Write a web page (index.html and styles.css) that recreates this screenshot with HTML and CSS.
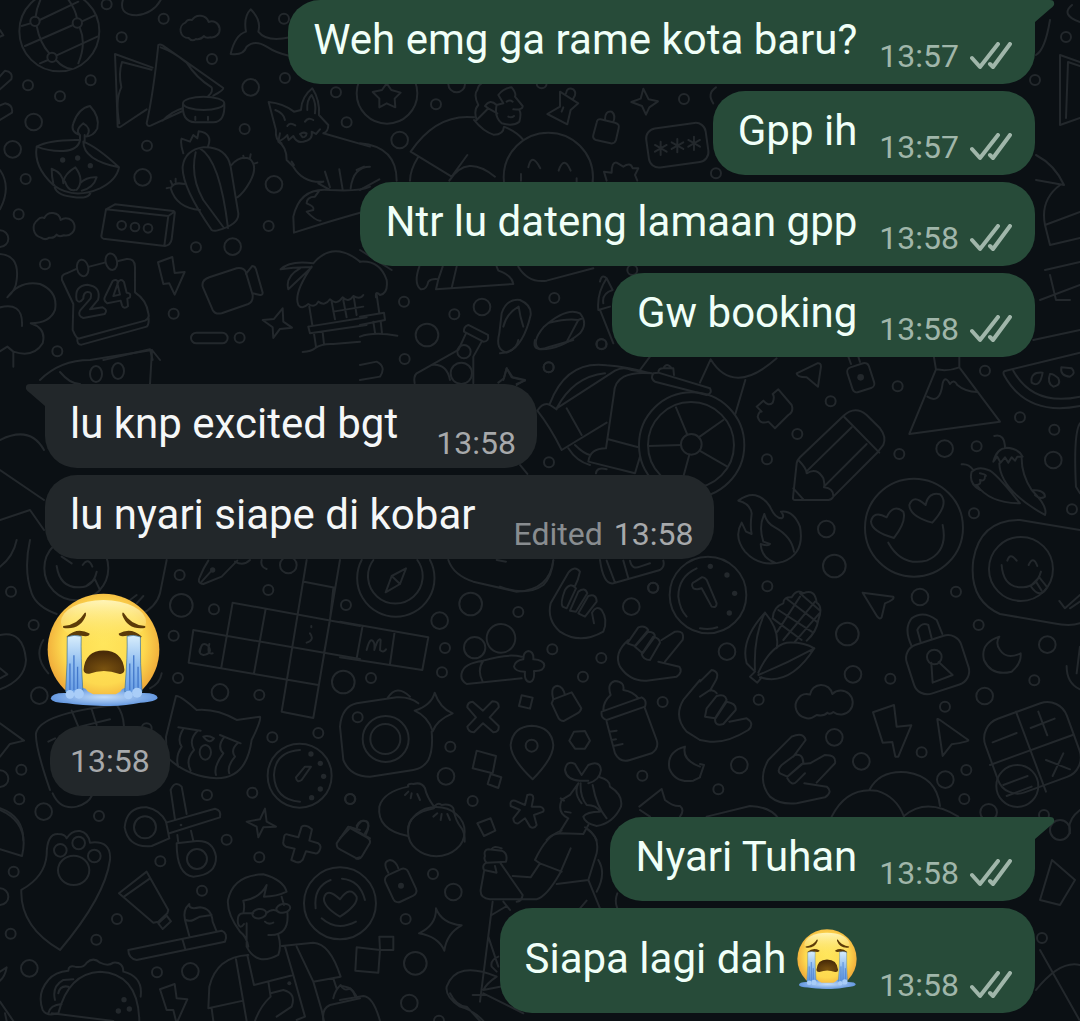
FILE: index.html
```html
<!DOCTYPE html>
<html lang="id">
  <head>
    <meta charset="UTF-8" />
    <meta name="viewport" content="width=device-width, initial-scale=1" />
    <title>Chat</title>
    <link rel="stylesheet" href="styles.css">
  </head>
  <body>
    <!-- WALLPAPER -->
    <svg class="wallpaper" viewBox="0 0 1080 1021" preserveAspectRatio="xMinYMin slice" aria-hidden="true">
      <defs>
        <marker id="dot-small" markerUnits="userSpaceOnUse" overflow="visible"><circle class="ring" r="15" /></marker>
        <marker id="dot-medium" markerUnits="userSpaceOnUse" overflow="visible"><circle class="ring" r="25" /></marker>
        <marker id="dot-large" markerUnits="userSpaceOnUse" overflow="visible"><circle class="ring" r="34" /></marker>
      </defs>

      <!-- top left: globe, samosa, diya, cactus, fox, calendar -->
      <g transform="scale(.3333)">
        <polyline class="dots-small" points="320,13 365,112 491,56 852,56 636,177 272,241 84,256 180,289 855,234 734,387 441,437 77,537 56,643 806,678 588,742 135,793 521,941 719,1013 172,1054 1008,277 1040,367" />
        <polyline class="dots-medium" points="101,366 38,448 428,532 698,740 752,262 822,553 0,716" />
        <circle cx="178" cy="94" r="120" />
        <circle cx="105" cy="64" r="14" /><circle cx="232" cy="69" r="14" /><circle cx="156" cy="172" r="14" />
        <path d="M107 50Q110 20 128-15M119 60L235 5M65 78L91 70M110 78Q120 130 148 160M75 138L219 75M246 64L285 46M190-20Q225 20 231 55M239 82Q260 130 235 190M120 190L144 180M170 166L292 110M168 180Q190 205 215 207" />
        <path d="M372-10Q350 45 410 46Q460 40 482 0M0 90L10 106L-5 112" />
        <path d="M566 114A24 24 0 0 1 556 68A18 18 0 0 1 576 60A28 28 0 0 1 626 66A24 24 0 1 1 632 112Q618 116 612 108Q602 120 588 117Q576 126 566 114Z" />
        <path d="M692 162Q705 105 738 95Q730 50 752 28Q785 60 775 95Q800 128 870 112M692 162Q730 168 740 140Q765 118 800 140Q830 160 870 168" />
        <path d="M458 203L345 162Q350 280 353 380Q358 384 365 378L440 328M455 209L366 186Q355 220 364 262Q345 300 358 370M475 135Q460 280 440 370Q442 380 452 377L548 333M475 135Q480 132 488 136L565 190L670 264Q672 270 640 287M482 142Q520 155 560 188Q590 235 635 262Q640 275 625 288M488 362Q515 335 548 325" />
        <ellipse cx="611" cy="310" rx="62" ry="20" /><path d="M549 312Q545 365 585 367H640Q676 365 673 312M586 350V360M624 350V360" />
        <path d="M110 440Q150 418 240 420Q235 450 190 453Q150 455 110 440Q100 500 160 555Q220 600 300 565Q350 540 357 502Q290 440 250 425Q250 480 357 502M240 420V405M254 425V405M240 405Q210 395 220 370Q235 325 270 318Q300 350 292 385Q280 410 254 410M238 403Q225 390 250 370Q275 385 262 405M163 555Q165 585 215 590Q270 600 272 575M160 550Q155 530 155 506Q190 520 190 550M190 545Q195 520 226 502Q255 540 230 570M240 550Q260 530 290 532Q280 565 245 572M195 545Q205 575 225 570" />
        <circle class="spot" cx="188" cy="480" r="8" /><circle class="spot" cx="233" cy="474" r="8" /><circle class="spot" cx="271" cy="497" r="8" />
        <path d="M550 460Q540 430 545 416L570 425L580 405L592 415L596 394Q640 400 624 440M635 690Q545 560 548 500Q555 450 610 442Q680 440 692 500L715 640Q718 675 650 692Q640 694 635 690M587 457Q570 530 610 600L672 684M600 445Q660 480 684 684M695 495Q720 465 750 477Q775 500 750 545Q730 580 712 592M553 552Q520 545 512 565Q530 625 600 630M500 565L508 563M512 543L516 552M527 536V545M730 467L732 475M752 463L750 474M772 488L763 491" />
        <path d="M318 628L345 613L520 633Q526 636 524 642L515 718Q512 735 495 738L310 716Q304 714 304 708ZM318 628L505 648L493 738M505 648L522 636" />
        <circle cx="365" cy="676" r="13" /><circle cx="405" cy="681" r="13" /><circle cx="444" cy="685" r="13" />
        <path d="M123 713A30 30 0 0 1 113 660A18 18 0 0 1 133 654A26 26 0 0 1 182 660A26 26 0 1 1 192 706Q176 712 170 704Q162 716 148 713Q136 722 123 713Z" />
        <path d="M231 806L200 820Q182 825 186 840L220 912L218 990Q230 1020 240 1015L435 962Q450 955 445 940Q440 900 405 877V800Q404 775 380 777L355 783M268 800L314 788M232 1015Q230 1035 245 1034L440 980Q447 975 446 955" />
        <ellipse cx="248" cy="804" rx="17" ry="25" transform="rotate(-12 248 804)" /><ellipse cx="334" cy="785" rx="17" ry="25" transform="rotate(-12 334 785)" />
        <path d="M230 900Q222 858 262 854Q305 860 294 900L270 928L308 922Q325 930 314 942L250 954Q232 948 240 932L272 895Q278 875 262 876Q250 878 250 896Q238 912 230 900ZM338 843Q350 835 354 848L340 888L360 884L352 850Q362 832 372 846L380 878Q394 878 390 892L382 896L384 918Q372 930 366 916L362 902L322 910Q308 902 316 888Z" />
        <path d="M474 787L517 771L524 819L554 816L524 884L508 850L490 852Z" />
        <path d="M628 832L710 805Q730 802 737 815L758 885Q760 905 745 912L665 940Q645 944 638 930L608 860Q604 840 628 832ZM738 822L757 798Q765 798 768 808L788 878Q788 886 780 885L758 880" />
        <path d="M848 925L850 965L876 983L840 987L820 1014L818 982L788 960L822 957Z" />
        <rect x="573" y="998" width="110" height="32" rx="16" />
        <path d="M-10 762Q60 760 50 840Q48 870 22 892Q60 840 120 852Q175 875 165 930Q150 970 92 970Q140 985 128 1030Q100 1075 40 1055L22 1040L-10 1060M-10 925Q70 900 66 978M40 1055V1100M310 1080L450 1048L458 1080M0 510Q35 560 0 628M-10 240L15 212Q40 215 34 238L0 268M-10 320L15 310Q40 315 36 338L0 360" />
        <path d="M845 430Q825 420 828 390L806 306Q850 310 882 335L903 330Q905 290 937 265Q960 300 957 345L985 375Q985 395 970 400L1110 440M826 330Q852 340 855 360M922 330Q920 300 935 285Q950 310 945 340M840 400L835 425Q855 415 862 405L866 420L880 408Q890 430 910 425Q940 420 935 395L948 402L960 388M862 378Q870 365 886 376M915 365Q925 350 940 360M900 402Q910 395 920 400Q918 412 908 412ZM835 425Q860 440 860 480L880 500Q910 550 970 545M875 485L882 495M970 545L955 550L990 570Q1080 575 1110 560M990 570Q900 560 880 650L882 698Q1000 660 1110 630M958 572L945 590Q920 590 920 610Q945 620 940 630L920 635Q950 665 962 662M975 515L990 562M1018 508L1028 568M1110 500Q1060 500 1052 565" />
        <path d="M842 808Q870 780 940 790M842 808Q890 800 935 802L865 868Q855 830 900 805M940 790Q1000 720 1080 785M935 800Q880 880 895 915Q905 930 925 912Q945 925 955 905Q975 920 990 898Q1010 918 1028 892Q1045 910 1060 888Q1080 900 1090 885M928 920L937 975M925 980L1100 952M925 980L930 1000L1100 975M942 1000L948 1040M968 996L972 1032M908 1056Q935 1055 945 1045Q965 1030 1000 1032L1080 1025M995 905L1005 958M1030 900L1040 952M1062 895L1070 945M1000 935L1090 920" />
      </g>

      <!-- top middle: hiker, smiley, pin, password, slippers, flask -->
      <g transform="translate(360 60) scale(.3333)">
        <polyline class="dots-small" points="228,133 972,117 132,725 283,763 583,714 724,852 134,897 566,922 1068,340 817,630 545,70" />
        <polyline class="dots-medium" points="290,72 119,240 366,741" />
        <circle cx="201" cy="825" r="34" /><circle cx="81" cy="100" r="91" />
        <path d="M80 70L94 90L122 98L104 116L106 142L80 130L58 142L58 116L38 96L66 90Z" />
        <path d="M350 180Q340 150 355 135Q340 105 352 90Q355 75 365 70M350 180L385 145L375 138Q390 115 410 135L430 130L415 105Q430 85 455 82Q470 100 465 110L488 138Q490 150 460 148M410 135Q402 170 425 190Q460 200 478 185Q485 160 478 150M445 170Q455 175 462 168M385 145L412 160M440 125Q450 118 458 125M342 180Q370 215 400 224Q430 225 432 200M342 172Q230 160 152 275L275 350L322 285M432 200Q470 215 490 240M175 290Q150 330 150 362M268 362Q320 280 405 350M0 250Q110 260 110 362M-10 330L12 320M0 390L58 358" />
        <circle cx="565" cy="352" r="134" /><path d="M505 322Q515 275 541 325M596 332Q612 285 632 332M483 342V362M650 355V365" />
        <path d="M600 95L655 130L632 150L622 193L562 162L600 140ZM618 100Q622 80 640 88Q652 100 640 115M610 142L605 155" />
        <path d="M722 178L765 188Q780 192 776 205L768 240Q764 252 752 250L708 240Q697 236 700 225L710 188Q712 176 722 178ZM735 178Q735 152 755 155Q768 165 760 186" />
        <path d="M850 86L866 118L894 124L868 142L858 164L846 138L814 126L842 116Z" />
        <rect x="862" y="197" width="180" height="118" rx="30" transform="rotate(-8 950 256)" />
        <path d="M902 245V285M885 255L920 275M920 255L885 275M952 237V277M935 247L970 267M970 247L935 267M1002 230V270M985 240L1020 260M1020 240L985 260" />
        <path d="M740 362L732 335L755 338Q755 305 770 308L790 320Q812 305 818 325L835 325L825 345L832 362M1068 82Q1040 100 1060 130" />
        <path d="M178 620Q160 670 182 688Q200 690 205 665Q215 655 235 658L228 688L460 672Q455 645 415 632L410 620M248 620L235 658M290 620L275 684M475 620Q505 670 560 662L700 625" />
        <path d="M425 760Q440 715 480 720Q515 735 512 765Q490 860 440 878Q405 870 418 820ZM430 800Q440 760 476 740Q480 770 490 800M552 800Q620 740 660 760Q685 790 660 820Q600 870 540 868Q510 850 552 800ZM570 788Q620 775 655 780L622 842M655 780L668 775" />
        <path d="M325 795Q310 800 312 815L370 845Q388 845 384 825ZM318 820L295 870L170 940Q160 950 164 970M365 845L340 890V970M215 915Q260 910 270 960" /><circle cx="312" cy="875" r="20" /><circle cx="304" cy="940" r="32" />
        <path d="M440 925L455 952L495 962L470 972M440 925L432 955L415 968M720 665Q725 640 740 655L758 690Q725 700 730 730M740 655Q710 700 715 750L750 740M720 750L760 850M0 605Q60 600 80 660Q85 700 60 705Q45 690 48 712M0 570L95 630M50 705L58 760M0 770L72 758L75 780L0 795M40 785L45 818M62 783L66 820M0 830Q40 815 112 827M0 915L50 905Q80 920 60 950L0 960" />
      </g>

      <!-- middle: fan, watch, badge -->
      <g transform="translate(500 340) scale(.3333)">
        <polyline class="dots-small" points="305,13 146,82 147,367 460,743" />
        <circle cx="575" cy="315" r="158" /><circle cx="573" cy="315" r="129" /><circle cx="574" cy="313" r="31" />
        <path d="M562 284L528 202M596 292L670 240M543 315L446 318M600 333L682 380M568 344L550 410M150 190Q200 60 320 76Q380 80 450 100M170 205Q220 110 315 100M170 205L345 92Q370 78 395 90L455 100Q345 90 342 160L318 325M112 212Q130 185 150 195L170 208M112 212Q150 260 185 330L320 248M200 205L245 285M205 325Q230 365 270 375M225 315Q250 340 270 345M318 325Q270 325 265 365L405 400L420 350M325 298L415 322M288 400Q290 380 320 388M460 100Q450 115 465 125L620 165Q638 160 630 145L475 98ZM475 98Q475 85 490 85H520L522 105M490 85Q500 65 515 85M0 40Q50 35 55 0M105 0Q95 40 150 20L220 0M20 85L38 112L75 120L50 135M20 85L10 120M420 90L450 50M600 128L632 58Q700 170 830 55M736 120L706 222M60 375L82 402" />
        <path d="M300 660Q310 735 340 730L480 690Q495 680 490 662M320 662L345 728M370 662L385 715M390 662Q395 690 420 680L450 670M0 740Q80 770 130 735Q155 710 160 662" />
        <circle cx="624" cy="765" r="115" /><path d="M590 685Q535 710 535 770Q540 810 560 830M580 745Q570 730 585 725L605 712Q612 710 620 720L650 790Q650 805 635 800L605 745Q590 750 580 745M652 862Q630 870 600 865" />
        <circle class="spot" cx="631" cy="679" r="8" /><circle class="spot" cx="681" cy="705" r="8" /><circle class="spot" cx="704" cy="760" r="8" /><circle class="spot" cx="688" cy="819" r="8" />
      </g>

      <!-- middle right: fire, pencil, volcano, melon, chillies -->
      <g transform="translate(720 340) scale(.3333)">
        <polyline class="dots-small" points="795,92 533,139 332,184 900,232 232,282 1003,269 770,319 538,342 141,358 762,520 1056,508 142,739 708,755 776,855" />
        <polyline class="dots-medium" points="674,326 1000,360 319,567 600,771" />
        <polyline class="dots-large" points="343,678 382,882" />
        <path d="M230 100L292 70Q303 68 303 80L294 140L260 112Q230 112 230 100ZM175 148L215 195Q222 215 205 225L165 265L145 245Q120 255 113 230Q118 212 125 215L110 200L130 182Q145 200 158 188Q165 170 158 162Z" />
        <rect x="388" y="74" width="68" height="78" rx="14" transform="rotate(-18 422 112)" /><circle class="spot" cx="422" cy="112" r="10" /><path d="M385 50L393 72M415 50L420 66" />
        <path d="M642 52L648 88L568 282L840 245L718 82V52M648 88Q685 95 718 82M622 170Q660 195 668 130Q675 105 690 132Q702 115 712 135Q735 155 772 156" />
        <path d="M1080 38L855 93Q848 95 852 105Q920 230 1080 198M880 92Q940 200 1080 170M940 0L1080-30" /><path d="M968 98Q930 95 935 128Q960 145 968 98ZM990 102Q980 130 1000 140Q1025 135 1015 115Q1000 100 990 102ZM1024 82Q1020 108 1050 110Q1070 100 1055 85Z" />
        <path d="M370 228Q405 195 440 225L480 265Q500 290 490 315L470 340L340 470Q335 480 325 480H225Q218 480 219 472L230 370Q232 360 240 352ZM370 228L478 338M395 262L262 392M440 312L312 440M235 360Q260 385 260 400Q290 380 310 415Q315 435 312 442Q340 445 340 468M220 445L250 478" />
        <path d="M95 582Q90 560 95 520Q90 490 55 482Q110 440 150 500Q165 535 185 535Q195 530 183 515Q220 510 240 560Q255 640 190 665Q120 685 75 635Q40 590 65 548L78 575ZM133 522Q140 550 165 562Q215 590 222 635M133 522Q115 560 130 605L150 612Q145 620 122 612Q125 655 165 668" />
        <circle cx="582" cy="563" r="147" /><path d="M522 594Q455 575 453 545Q460 510 500 532Q520 490 550 515Q560 545 522 594ZM637 548Q570 530 568 495Q580 460 617 495Q625 455 660 463Q690 490 637 548ZM505 608Q545 680 620 662Q685 635 668 555" />
        <path d="M823 288Q855 280 855 325M820 365Q830 325 860 323Q895 325 908 350L892 350L885 362L875 352L865 368L855 352L842 368L832 350ZM838 370Q840 450 975 525Q985 500 935 450Q905 405 905 355M725 373Q745 370 760 390M780 450Q745 430 755 395Q775 378 805 390Q825 395 900 490Q810 490 770 435M768 435Q785 435 780 420Q795 425 795 410Q805 405 780 400M935 450Q975 450 975 470Q960 480 945 465M1080 250Q1060 280 1068 440L1080 460" />
        <path d="M1080 570L900 540Q780 540 760 660Q745 780 840 822L1000 850Q1050 860 1080 850M862 662Q870 635 890 662M926 675Q940 645 952 678M845 675Q850 745 910 742Q950 740 963 695M932 738L958 712L982 742Q960 780 932 738ZM948 725L965 752M1018 783L1035 805L1080 765M1050 805L1080 785" /><circle cx="903" cy="687" r="96" />
      </g>

      <!-- lower left: crossword, crying cat, timer -->
      <g transform="translate(0 540) scale(.3333)">
        <polyline class="dots-small" points="33,155 101,255 539,105 805,150 642,208 1038,195 521,287 534,414 778,465 817,592 955,579 64,689 58,778 297,828 621,765 757,758 1050,777 440,565" />
        <polyline class="dots-medium" points="118,467 660,457 131,815 0,716 865,75" />
        <polyline class="dots-large" points="544,196 1030,426" />
        <path d="M90 0Q70 90 95 160Q110 200 170 222M500 60L480 160Q470 200 420 225M170 78Q180 145 240 142Q280 140 290 95M185 50L215 70M248 75Q265 50 277 80M262 135L285 118L300 150M0 80Q40 50 50 0M0 285Q70 270 78 360Q75 420 0 448M0 385L22 403L0 415M130 300Q100 350 145 400M485 400Q480 430 450 445M0 550L72 602L30 612L0 650M390 180L410 165M410 190L430 168" /><circle cx="229" cy="85" r="96" />
        <path d="M600 110Q610 85 625 62M600 110Q590 130 610 132L665 110L712 62M605 125L635 92M705 65Q730 80 750 60M785 60Q780 80 800 87" /><circle class="spot" cx="638" cy="90" r="8" />
        <path d="M698 188L1080 258M580 270L1080 357M566 368L955 435M698 188L680 290L664 382M580 270L566 368M797 207L762 400M920 60L845 515L940 534L1020 60M912 125L1005 143M1000 145L990 240L972 340M600 335Q605 300 625 318Q640 340 610 345Q590 340 605 318M628 312Q620 345 638 340M930 280Q945 300 920 308M934 258V262" />
        <path d="M498 590L528 468Q540 465 590 510Q650 505 710 540L780 530Q785 540 755 600Q740 715 650 715Q560 710 500 650ZM535 562L602 572M660 585L722 610M550 566Q530 600 545 620Q525 650 535 680M592 573Q565 600 582 630Q555 660 572 692M672 592Q650 620 670 640Q640 680 648 705M714 608Q690 630 705 650Q680 680 688 700M610 590Q625 585 642 595Q630 615 610 590Z" /><ellipse cx="616" cy="637" rx="17" ry="22" />
        <circle cx="899" cy="707" r="96" /><path d="M900 630Q825 635 822 705Q825 780 900 785M888 712L915 680L933 680L905 720Q890 730 888 712Z" />
        <circle class="spot" cx="933" cy="642" r="8" /><circle class="spot" cx="961" cy="670" r="8" /><circle class="spot" cx="971" cy="709" r="8" /><circle class="spot" cx="961" cy="747" r="8" /><circle class="spot" cx="935" cy="773" r="8" />
        <path d="M150 750Q105 620 108 580Q120 520 350 495Q370 520 372 560M215 512L235 560M275 508L290 555M240 560L330 538M145 605L165 595M158 760Q180 810 230 800Q265 790 275 768M0 805Q70 830 70 900" />
        <path d="M795 806L800 845L828 860L790 862L775 892L770 860L740 845L780 838Z" />
      </g>

      <!-- lower middle: compass, camera, people, hands, bottle, buns -->
      <g transform="translate(340 540) scale(.3333)">
        <polyline class="dots-small" points="535,216 939,143 315,324 637,328 306,397 93,414 784,354 729,410 968,486 331,620 907,707 31,777 398,783 53,532" />
        <polyline class="dots-medium" points="299,242 874,200 318,709" />
        <polyline class="dots-large" points="392,192" />
        <path d="M65 60A116 116 0 1 0 270 60M100 60A82 82 0 1 0 232 60M198 85L155 108L137 157L180 132ZM155 108L180 132M325 60Q340 105 400 125L530 155Q630 150 640 60M470 60L498 65" />
        <path d="M0 245L265 292L247 390L0 352M67 262L50 355M164 275L150 372M80 330Q90 290 100 305Q105 310 103 330Q115 290 122 300L120 330Q130 340 138 328" />
        <circle cx="404" cy="323" r="32" /><circle cx="483" cy="295" r="43" />
        <path d="M545 415L380 432Q360 420 365 400Q370 370 430 362Q500 340 545 350M430 362Q410 390 428 425M550 358Q550 335 565 333Q582 335 580 358Q612 360 613 377Q610 395 582 393Q585 422 570 426Q552 425 555 395Q525 395 522 380Q525 362 550 358Z" />
        <path d="M720 95Q705 75 685 98L632 190Q620 240 660 275Q720 315 790 275Q805 240 785 210Q770 195 756 218L762 250M720 95Q715 120 705 138M668 200Q660 190 675 150Q690 125 708 145L680 205ZM690 212L715 155Q735 140 742 160L708 215ZM715 220L745 168Q770 160 770 185L735 230Z" />
        <path d="M865 300Q820 340 840 380Q870 425 920 422L1010 410Q1030 395 1018 380L955 365M965 300L1005 275Q1035 270 1028 300L975 365M862 310L895 262Q915 255 925 270L885 318ZM885 320L925 275Q945 275 945 290L908 340ZM905 342L940 290Q960 295 960 308L930 360Q910 360 905 342Z" />
        <path d="M50 490L170 472Q210 470 235 490M275 575Q280 630 265 660Q250 685 220 690L90 710Q30 710 10 660L0 560Q5 500 50 490M142 475Q170 430 210 470M284 458Q300 505 338 520Q290 540 278 574Q265 530 224 512Q275 495 284 458Z" /><circle cx="137" cy="597" r="69" /><circle cx="136" cy="597" r="45" />
        <path d="M398 485L429 512L457 484Q478 484 476 502L449 532L476 558Q478 576 460 577L429 550L402 577Q384 576 382 560L408 532L382 502Q382 486 398 485ZM545 466L578 473L570 506L537 498ZM410 632L468 648L458 700L398 685ZM452 702L484 712L475 744L443 732ZM412 850L452 835L466 872L432 888Z" />
        <path d="M640 478L695 457L724 505Q722 515 712 520L672 543Q662 544 656 535L635 490ZM640 478Q630 440 652 437Q670 440 675 465M702 575L735 573L750 602L735 626H705L688 602Z" />
        <path d="M578 718Q512 655 512 615Q518 560 575 557Q635 560 640 615Q640 655 578 718Z" /><circle cx="575" cy="617" r="18" />
        <path d="M785 515L905 472Q922 480 915 500L800 540Q782 535 785 515ZM790 510Q790 485 812 465Q800 430 825 423Q855 425 850 450Q880 455 895 475M800 545L825 640Q840 670 870 660L935 640Q958 625 950 600L915 505M808 575L830 572M815 600L828 598M820 618L848 612M1080 420L1030 480Q1000 530 1040 575L1080 600" />
        <path d="M1035 620Q980 635 988 685Q1005 730 1060 722L1080 712M1035 620Q1025 660 1080 680M898 800L965 747L975 780Q1000 800 1020 798Q1035 810 1020 830M900 810L930 830" />
        <path d="M118 800Q130 755 205 740Q200 730 220 732Q245 725 255 745Q260 770 282 800M282 805Q205 820 204 870M118 800Q110 870 204 888M280 805Q290 785 305 795Q330 790 340 805Q345 840 365 865Q375 880 374 905M195 765L205 755M212 775L215 760M240 780L232 762M280 830L292 820M302 840L305 822M330 840L322 822" />
        <path d="M562 765Q580 760 580 775L575 800L600 800Q615 805 610 815L582 825L590 855Q582 868 570 860L555 835L535 850Q520 852 520 835L540 810L512 798Q508 780 525 782L555 795Z" />
        <path d="M720 722L745 722M720 722Q680 720 675 690Q680 660 705 672L725 705L745 675Q780 660 783 690Q780 720 745 730M780 712Q810 720 810 740Q850 765 843 800Q820 850 770 858Q735 850 730 830Q740 815 780 815Q770 795 740 795Q720 770 722 730M758 735Q770 800 800 835M715 730Q700 760 725 790M715 730L690 765L665 780Q650 820 685 835L660 875M662 775L672 782M675 815L692 818M745 855L730 882L665 880Q635 880 620 900M735 862Q760 880 770 900" />
        <path d="M0 895L32 862L90 895M50 865Q60 835 82 845Q92 855 75 880" />
      </g>

      <!-- lower right: corn, locks, calculator, horns, clouds -->
      <g transform="translate(700 560) scale(.3333)">
        <polyline class="dots-small" points="571,356 1003,361 176,419 735,440 665,577 799,630 793,717 55,688 1032,765" />
        <polyline class="dots-medium" points="81,275 459,343 1042,254 854,408 403,532 118,615 484,604 736,659 866,757" />
        <path d="M488 98L580 110Q585 118 555 130L545 172Q540 180 532 170Z" />
        <path d="M195 158Q120 240 140 310L165 335M195 158Q160 230 165 330M195 158Q240 210 230 265M175 338Q210 260 260 248Q310 245 343 265Q270 380 180 352M175 345Q260 310 343 265M165 335L150 350L172 368L185 352M218 175Q220 140 250 130Q250 110 275 112Q290 85 310 100Q345 85 350 128Q370 140 355 180Q350 215 320 242M218 175L305 240M235 150L335 215M262 118L350 185M300 100L358 150M232 215L300 110M250 240L345 125M285 245L358 160" />
        <path d="M635 258Q610 205 635 175Q670 150 710 180L727 222M662 246L652 210Q665 185 685 195L695 235" /><rect x="627" y="237" width="172" height="154" rx="42" transform="rotate(-18 713 314)" /><path d="M694 308L698 368L758 345L716 306" /><circle cx="703" cy="291" r="22" />
        <path d="M898 230Q840 250 852 300Q875 350 935 335Q965 310 962 280Q920 300 900 270Q885 250 898 230ZM1100 318Q1100 370 1140 388M1140 260L1130 340" />
        <path d="M315 473A36 36 0 0 1 295 415A30 30 0 0 1 330 404A34 34 0 0 1 397 402A36 36 0 1 1 400 456Q390 465 382 458Q372 470 350 465Q330 480 315 473Z" />
        <path d="M519 457L582 435L590 500L634 496L595 590H586L577 546L548 548ZM712 478Q712 475 720 480L805 540Q808 545 755 553L728 588Z" />
        <path d="M0 365L35 330Q60 335 48 360L30 392M0 410L30 390Q45 392 50 400M15 470L20 445L50 408Q75 400 80 420L45 475ZM45 478L80 425Q110 430 107 450L70 492Q45 500 45 478M88 485L140 475Q165 490 145 510Q80 550 30 545L0 540M0 612L12 615L0 650" />
        <path d="M275 530Q310 515 317 540L280 590M275 530L205 600Q170 660 210 710Q240 735 290 730L375 712Q400 695 380 680L313 670M240 640Q230 630 245 615L285 585Q310 580 310 610L262 650ZM262 650L305 612L330 610L375 585Q410 585 405 610L350 668M262 655Q275 680 290 665L315 640" />
        <rect x="868" y="446" width="260" height="235" rx="62" transform="rotate(-20 998 565)" /><path d="M948 455L1038 695M870 615L1118 525M878 547L950 519M992 504L1064 476M1015 455L1042 526M1038 600L1110 628M1090 580L1058 648M910 675L983 648M920 708L995 680" /><circle cx="952" cy="678" r="63" />
        <path d="M395 770Q440 680 530 692Q590 710 612 770M508 690Q540 630 620 637Q710 650 720 738M612 768Q680 710 775 770M20 770L150 738Q210 740 235 775M1140 750Q1100 780 1110 820" />
      </g>

      <!-- bottom left: paw, scissors, cake, taco, reader -->
      <g transform="translate(0 780) scale(.3333)">
        <polyline class="dots-small" points="680,179 481,244 778,232 41,275 606,332 351,417 32,461 289,479 471,577" />
        <polyline class="dots-medium" points="0,350 88,565 571,574" />
        <path d="M64 330Q135 290 140 225Q140 160 175 162Q195 162 200 175Q215 150 240 153Q265 158 270 188Q335 180 330 240Q315 350 180 510Q60 440 64 330ZM0 90Q90 130 66 228L0 208" />
        <circle cx="181" cy="211" r="19" /><circle cx="236" cy="189" r="19" /><circle cx="283" cy="228" r="19" /><ellipse cx="221" cy="271" rx="47" ry="44" />
        <circle cx="435" cy="142" r="33" /><circle cx="591" cy="237" r="30" />
        <path d="M508 175L455 198Q385 205 374 142Q380 80 440 82Q480 90 498 125ZM498 128L645 86Q665 90 660 112L508 160M525 118L512 30Q525 0 545 20L560 102M532 165L535 188M573 152L580 182M530 190Q530 285 580 290Q650 285 648 230Q640 180 590 183Z" /><circle class="spot" cx="543" cy="135" r="4" />
        <path d="M440 275L357 340L460 428L475 425L502 400L505 390ZM450 295L372 350M475 430L500 407L513 424L488 447ZM850 185L853 168Q856 160 865 164L895 172L905 140Q912 134 925 140L936 148L928 182L955 190Q965 196 960 208Q955 222 945 220L918 214L908 240Q900 250 888 246L874 240L884 206L858 200Q848 195 850 185Z" />
        <path d="M385 510L665 452Q685 460 675 485L410 540Q385 535 385 510ZM548 480L556 508M568 468L555 420M555 420Q548 390 568 372Q565 390 600 382Q635 385 638 425L650 455M558 420Q570 425 580 420L600 410L635 405" />
        <path d="M745 500Q740 470 720 455Q680 400 684 360Q700 285 790 283Q850 300 860 335Q830 350 792 350L800 315Q780 355 730 362Q735 380 730 400Q710 400 714 430Q720 450 732 432M740 430V500Q770 560 835 525Q845 500 835 465M730 400L760 400M845 350L852 375M862 395Q870 470 805 465M795 425Q805 435 820 428" /><ellipse cx="778" cy="401" rx="21" ry="14" transform="rotate(-10 778 401)" /><ellipse cx="850" cy="385" rx="21" ry="13" transform="rotate(-10 850 385)" />
        <path d="M798 400Q815 385 830 392M745 525Q650 530 628 620L625 685L730 662M708 538L740 723M742 525L762 615L880 585L855 500M845 498L940 488Q990 490 1022 590L940 605L965 690L972 723M890 500L940 605M880 585L915 710L890 720M805 605L812 650Q780 680 765 723M812 640L850 630Q890 640 875 680L830 710M635 685L640 723M1000 595L1010 625M1000 655Q1005 630 1022 615Q1030 635 1050 625Q1065 640 1070 650M1080 655L990 675Q965 685 970 723" /><circle class="spot" cx="868" cy="610" r="6" />
        <circle cx="1020" cy="370" r="108" /><path d="M1020 410Q970 380 972 355Q980 320 1020 358Q1050 315 1070 350Q1075 375 1020 410ZM992 300Q940 320 947 385M965 415Q1010 455 1068 425M1026 296Q1080 300 1095 360M1010 190L1045 140L1080 150M1010 190Q1010 205 1020 208L1070 235L1080 232" />
        <path d="M480 628L524 612L530 655L562 658L533 723M480 628L500 690L520 690L528 723M128 690Q110 640 145 600Q165 575 205 572Q205 555 225 560Q250 565 260 548Q280 530 300 548Q325 560 340 548Q370 545 370 575Q430 590 422 650M128 690Q140 710 175 700Q205 580 300 575Q415 580 418 723M155 700L340 723M165 660Q155 620 190 600L220 598M175 640Q180 615 205 620M145 700Q150 675 185 672M0 575L20 562Q15 590 0 602M0 665L40 723M15 700L20 723" /><circle class="spot" cx="372" cy="659" r="8" /><circle class="spot" cx="355" cy="693" r="8" /><circle class="spot" cx="388" cy="687" r="8" />
      </g>

      <!-- bottom middle: bun, luggage tag, sparkle, walker -->
      <g transform="translate(340 780) scale(.3333)">
        <polyline class="dots-small" points="279,282 197,417 297,722" />
        <polyline class="dots-medium" points="340,336 208,669" />
        <circle cx="226" cy="550" r="34" />
        <ellipse cx="289" cy="155" rx="85" ry="74" />
        <path d="M32 145L80 172Q92 178 90 188L65 230Q60 240 48 236M50 138Q60 115 80 125Q92 135 78 162" /><rect x="145" y="272" width="75" height="88" rx="16" transform="rotate(-25 183 317)" /><circle class="spot" cx="183" cy="317" r="9" /><path d="M145 278Q125 245 150 240Q168 242 175 265" />
        <path d="M288 385Q305 430 365 436Q320 460 313 512Q295 470 237 460Q290 435 288 385ZM50 502L120 510L115 578L46 572ZM118 470H160V510H120ZM0 660L70 648Q100 650 120 723M0 618Q40 620 45 648" />
        <path d="M435 228Q430 210 445 208L485 212Q505 220 498 245L440 248Q430 240 435 228ZM455 208Q460 195 485 205M440 248Q425 255 432 270L470 278L465 258M432 275L422 330Q420 355 450 358H590Q620 350 660 280L692 205M482 250L548 345Q545 365 530 365M518 288L572 292L600 250L585 240Q620 165 665 152M600 250L665 275M770 220Q780 170 740 145M770 220L745 300L650 312M745 300L780 385M775 240Q800 280 770 335M458 365L420 665M455 405L500 378M490 365L510 390M445 470L475 560M398 645H440M470 590Q350 540 320 620Q315 650 360 680Q400 690 430 723M330 640Q350 680 380 680L420 723M430 640L550 700M475 530Q450 540 455 560L470 575M832 340Q820 370 840 400M720 385L740 362M470 590Q440 610 430 630L480 620" />
      </g>

      <!-- right edge -->
      <g>
        <path d="M1050 20Q1045 50 1036 55M1060 125V55L1080 62M1066 118L1068 62L1080 66M1060 125L1080 118M1036 155Q1055 165 1064 185L1036 180M1060 185Q1040 200 1045 225L1080 212M1045 225L1050 245L1080 238M1072 5Q1060 15 1080 22M1040 300L1080 285M1045 270L1080 262M1050 275L1056 300L1070 300M40 380Q60 360 90 360L152 350L160 360M60 372Q70 384 80 384M152 350L150 384M0 440Q30 425 44 450M0 470L44 500M0 520L30 510L44 530M1040 950L1080 1021M1036 990Q1060 960 1080 965M1052 860L1075 880L1060 905L1040 900Z" />
        <ellipse cx="96" cy="374" rx="6" ry="8" /><ellipse cx="118" cy="371" rx="6" ry="8" />
        <circle cx="1066" cy="37" r="5" /><circle cx="1035" cy="80" r="5" /><circle cx="1042" cy="938" r="5" /><circle cx="1060" cy="830" r="10" />
      </g>
    </svg>

    <!-- SHARED SYMBOLS -->
    <svg class="symbols" aria-hidden="true">
      <defs>
        <radialGradient id="face" cx=".5" cy=".45" r=".56">
          <stop offset="0" stop-color="#ffe65c" />
          <stop offset=".65" stop-color="#fdd94f" />
          <stop offset="1" stop-color="#eda135" />
        </radialGradient>
        <linearGradient id="shine" x2="0" y2="1">
          <stop offset="0" stop-color="#fff8c4" stop-opacity=".9" />
          <stop offset="1" stop-color="#ffe96a" stop-opacity="0" />
        </linearGradient>
        <linearGradient id="tear" x2="0" y2="1">
          <stop offset="0" stop-color="#d9eefc" />
          <stop offset=".5" stop-color="#8fbdf0" />
          <stop offset="1" stop-color="#649ae2" />
        </linearGradient>
        <radialGradient id="mouth" cx=".5" cy=".8" r=".7">
          <stop offset="0" stop-color="#7a5310" />
          <stop offset="1" stop-color="#4a2c08" />
        </radialGradient>
        <radialGradient id="puddle">
          <stop offset="0" stop-color="#c3ddfa" />
          <stop offset="1" stop-color="#6598e0" />
        </radialGradient>
      </defs>
      <symbol id="cry" viewBox="50 38 338 340">
        <circle cx="219" cy="208" r="168" fill="url(#face)" />
        <ellipse cx="219" cy="125" rx="128" ry="66" fill="url(#shine)" />
        <path d="M98 137Q140 135 162 98Q168 94 166 106Q150 148 104 144Q94 143 98 137ZM344 137Q302 135 280 98Q274 94 276 106Q292 148 338 144Q348 143 344 137Z" fill="#5c3b08" />
        <path d="M108 169Q140 140 177 160Q178 168 165 168Q140 164 114 176ZM334 169Q302 140 265 160Q264 168 277 168Q302 164 328 176Z" fill="#5c3b08" />
        <path d="M159 270Q164 211 219 211Q276 211 282 270Q280 284 265 281Q220 264 176 281Q160 282 159 270Z" fill="url(#mouth)" />
        <path d="M60 356Q62 338 105 339L145 328Q162 318 172 334L188 343H256L270 334Q280 318 300 328L335 339Q380 338 382 353Q378 365 330 368Q280 379 220 378Q150 377 110 370Q65 368 60 356Z" fill="url(#puddle)" />
        <path d="M110 170Q130 162 152 168Q150 220 157 335Q130 345 105 335Q111 250 110 170ZM290 168Q310 162 330 170Q329 250 335 335Q310 345 283 335Q292 220 290 168Z" fill="url(#tear)" stroke="#357098" stroke-width="2" />
        <path d="M118 250V330M130 225V330M141 260V330M298 250V330M310 225V330M323 260V330" fill="none" stroke="#4378cb" stroke-width="4" />
        <g fill="#a9cdf8">
          <circle cx="118" cy="343" r="13" /><circle cx="145" cy="341" r="15" /><circle cx="294" cy="345" r="13" /><circle cx="320" cy="338" r="15" />
        </g>
      </symbol>
      <symbol id="ticks" viewBox="0 0 42 28">
        <path d="M2 16L10 25L28 2M20 22L23 25L40 2" fill="none" stroke="currentColor" stroke-width="4" stroke-linecap="round" stroke-linejoin="round" />
      </symbol>
      <symbol id="tail" viewBox="0 0 40 22">
        <path d="M0 0H35Q40 0 39 5Q38 7 35 9L20 22H0Z" fill="currentColor" />
      </symbol>
    </svg>

    <main class="chat">
      <ul class="group sent">
        <li class="bubble first">
          <svg class="tail"><use href="#tail" /></svg>
          <p>Weh emg ga rame kota baru?</p>
          <div class="meta"><time>13:57</time><svg class="ticks"><use href="#ticks" /></svg></div>
        </li>
        <li class="bubble">
          <p>Gpp ih</p>
          <div class="meta"><time>13:57</time><svg class="ticks"><use href="#ticks" /></svg></div>
        </li>
        <li class="bubble">
          <p>Ntr lu dateng lamaan gpp</p>
          <div class="meta"><time>13:58</time><svg class="ticks"><use href="#ticks" /></svg></div>
        </li>
        <li class="bubble">
          <p>Gw booking</p>
          <div class="meta"><time>13:58</time><svg class="ticks"><use href="#ticks" /></svg></div>
        </li>
      </ul>

      <ul class="group received">
        <li class="bubble first">
          <svg class="tail"><use href="#tail" /></svg>
          <p>lu knp excited bgt</p>
          <div class="meta"><time>13:58</time></div>
        </li>
        <li class="bubble">
          <p>lu nyari siape di kobar</p>
          <div class="meta"><span class="edited">Edited</span><time>13:58</time></div>
        </li>
        <li class="sticker">
          <svg class="emoji-big" role="img" aria-label="😭"><use href="#cry" /></svg>
          <time class="pill">13:58</time>
        </li>
      </ul>

      <ul class="group sent">
        <li class="bubble first">
          <svg class="tail"><use href="#tail" /></svg>
          <p>Nyari Tuhan</p>
          <div class="meta"><time>13:58</time><svg class="ticks"><use href="#ticks" /></svg></div>
        </li>
        <li class="bubble tall">
          <p>Siapa lagi dah <svg class="emoji" role="img" aria-label="😭"><use href="#cry" /></svg></p>
          <div class="meta"><time>13:58</time><svg class="ticks"><use href="#ticks" /></svg></div>
        </li>
      </ul>
    </main>
  </body>
</html>
```
FILE: styles.css
```css
* {
  box-sizing: border-box;
}

body {
  margin: 0;
  background: #0b1014;
  font-family: Roboto, "Noto Sans", sans-serif;
  position: relative;
  min-height: 100vh;
  overflow-x: hidden;
}

/* wallpaper */
.wallpaper {
  position: absolute;
  inset: 0;
  width: 100%;
  height: 100%;
  fill: none;
  stroke: #23282c;
  stroke-width: 2;
  stroke-linecap: round;
  stroke-linejoin: round;
}

.wallpaper g[transform] {
  stroke-width: 6;
}

.wallpaper polyline {
  stroke: none;
}

.ring {
  stroke: #23282c;
  stroke-width: 6;
}

.wallpaper .spot {
  fill: #23282c;
  stroke: none;
}

.dots-small {
  marker: url(#dot-small);
}

.dots-medium {
  marker: url(#dot-medium);
}

.dots-large {
  marker: url(#dot-large);
}

.symbols {
  position: absolute;
  width: 0;
  height: 0;
}

/* messages */
.chat {
  position: relative;
  padding: 0 45px 8px;
}

.group {
  display: flex;
  flex-direction: column;
  gap: 7px;
  margin: 0;
  padding: 0;
  list-style: none;
}

.group + .group {
  margin-top: 27px;
}

.sent {
  align-items: flex-end;
}

.received {
  align-items: flex-start;
}

.received + .sent {
  margin-top: 21px;
}

.bubble {
  position: relative;
  display: flex;
  align-items: flex-end;
  gap: 22px;
  min-height: 84px;
  padding: 10px 23px 12px 25px;
  border-radius: 32px;
}

.sent .bubble {
  background: #274b39;
  color: #f0fff8;
}

.received .bubble {
  gap: 38px;
  padding-right: 21px;
  padding-bottom: 9px;
  background: #22272a;
  color: #f5f7f8;
}

.sent .first {
  border-top-right-radius: 0;
}

.received .first {
  border-top-left-radius: 0;
}

.bubble p {
  margin: 0;
  padding-bottom: 7px;
  font-size: 42px;
  line-height: 50px;
}

.received p {
  padding-bottom: 10px;
}

.meta {
  display: flex;
  align-items: center;
  gap: 11px;
  font-size: 32px;
  line-height: 32px;
}

.sent .meta {
  color: #a0b6aa;
}

.received .meta {
  color: #a7a9ab;
}

.received .edited {
  color: #898d90;
}

.ticks {
  width: 42px;
  height: 28px;
}

.tail {
  position: absolute;
  top: 0;
  width: 40px;
  height: 22px;
}

.sent .tail {
  left: calc(100% - 20px);
  color: #274b39;
}

.received .tail {
  right: calc(100% - 20px);
  color: #22272a;
  transform: scaleX(-1);
}

.tall {
  min-height: 105px;
}

.tall p {
  display: flex;
  align-items: center;
  gap: 11px;
  line-height: 60px;
  padding-bottom: 12px;
}

.emoji {
  width: 60px;
  height: 60px;
}

.sticker {
  display: flex;
  flex-direction: column;
  align-items: flex-start;
  gap: 20px;
  padding: 27px 0 0 2px;
}

.emoji-big {
  width: 113px;
  height: 113px;
}

.pill {
  margin-left: 3px;
  padding: 19px 20px;
  border-radius: 32px;
  background: #22272a;
  color: #a7a9ab;
  font-size: 32px;
  line-height: 32px;
}
```
